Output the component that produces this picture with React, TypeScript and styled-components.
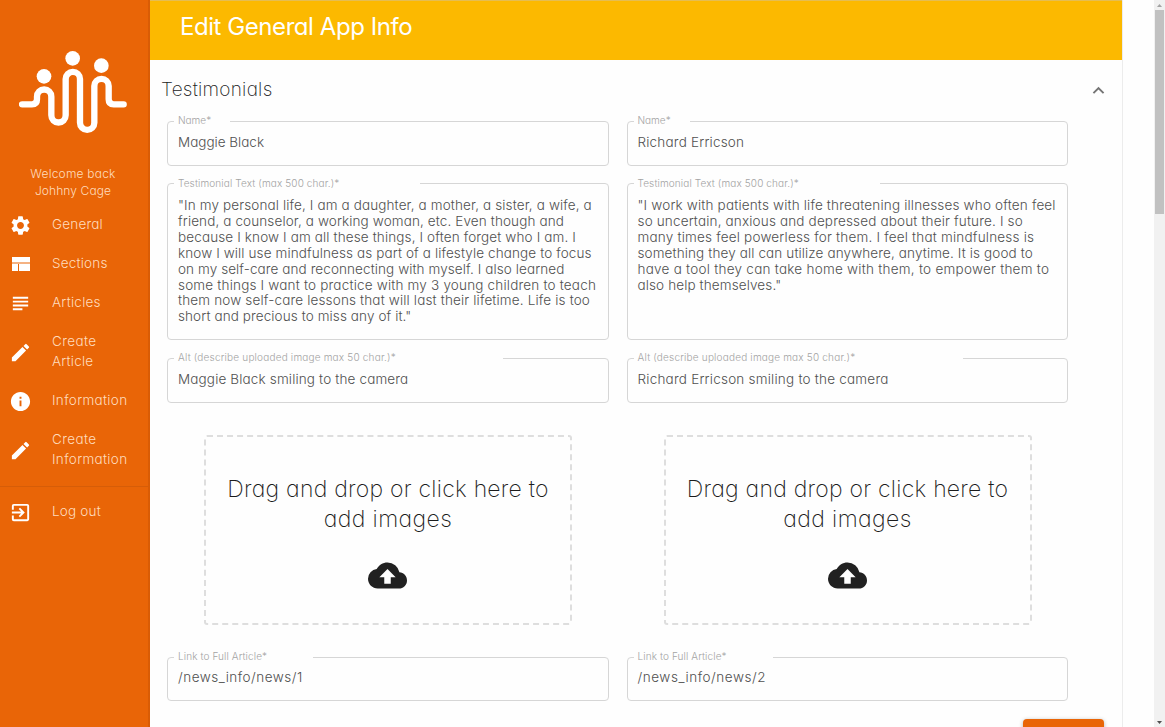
import React from "react";
import styled, { createGlobalStyle } from "styled-components";
import { MdSettings, MdSubject, MdEdit, MdInfo, MdExitToApp, MdExpandLess, MdCloudUpload } from "react-icons/md";

const GlobalStyle = createGlobalStyle`
  *, *::before, *::after { box-sizing: border-box; }
  body {
    margin: 0;
    background: #fefefe;
    overflow: hidden;
    font-family: Inter, "Open Sans", sans-serif;
    font-weight: 300;
    font-feature-settings: "cv11" 1;
  }
`;

const Page = styled.div`
  display: flex;
  height: 727px;
  overflow: hidden;
`;

const Sidebar = styled.aside`
  width: 150px;
  flex: none;
  background: #e96507;
  border-right: 2px solid #d95c05;
  color: #ffdcbd;
`;

const Logo = styled.svg`
  display: block;
  width: 108px;
  height: 84px;
  margin: 51px 0 0 19px;
`;

const Welcome = styled.div`
  margin-top: 30px;
  width: 146px;
  text-align: center;
  font-size: 12px;
  line-height: 17px;
`;

const Line = styled.div<{ $track?: number }>`
  white-space: nowrap;
  letter-spacing: ${(p) => p.$track ?? 0}px;
`;

const Nav = styled.nav`
  margin-top: 6px;
`;

const NavItem = styled.a`
  display: flex;
  align-items: center;
  padding: 9px 0 10px 9px;
  font-size: 13.5px;
  line-height: 20px;

  svg {
    width: 23px;
    height: 23px;
    margin: 0 20px -3px 0;
    color: #fff;
    flex: none;
  }
`;

const NavDivider = styled.hr`
  border: 0;
  height: 1px;
  margin: 7px 0 5px;
  background: #d65d08;
`;

const Content = styled.main`
  width: 973px;
  flex: none;
  border-right: 1px solid #ececec;
`;

const Header = styled.header`
  height: 60px;
  width: 972px;
  padding: 11px 0 0 30px;
  background: #fcb900;
  border-top: 1px solid #e5bd52;
  color: #fff;
  font-size: 24px;
  font-weight: 400;
  line-height: 30px;
`;

const PanelHeader = styled.div`
  display: flex;
  justify-content: space-between;
  align-items: center;
  height: 60px;
  padding: 0 12px 2px 11px;
  font-size: 19px;
  font-weight: 200;
  color: #1c1c1c;

  svg {
    width: 23px;
    height: 23px;
    color: #757575;
    margin-top: 3px;
  }
`;

const Columns = styled.div`
  display: grid;
  grid-template-columns: 441.5px 441.5px;
  column-gap: 18px;
  padding: 0 0 0 17px;
  margin-top: -5px;
`;

const Column = styled.div`
  display: flex;
  flex-direction: column;
`;

const Field = styled.fieldset<{ $height: number; $gap: number }>`
  margin: 0 0 ${(p) => p.$gap}px;
  height: ${(p) => p.$height}px;
  min-width: 0;
  padding: 0 10px;
  border: 1px solid #d6d6d6;
  border-radius: 4px;
  color: #505050;
  font-size: 13.5px;
  line-height: 15.9px;
`;

const Label = styled.legend<{ $notch: number; $leading?: number }>`
  width: ${(p) => p.$notch}px;
  height: 13px;
  margin-left: -4px;
  padding: 0 0 0 4px;
  font-size: 10px;
  line-height: ${(p) => p.$leading ?? 11}px;
  color: #a3a3a3;
`;

const Value = styled.div<{ $top?: number }>`
  padding-top: ${(p) => p.$top ?? 7}px;
`;

const DropZone = styled.div`
  width: 368px;
  height: 190px;
  margin: 0 0 26px 37px;
  padding-top: 37px;
  border: 2px dashed #dedede;
  border-radius: 3px;
  display: flex;
  flex-direction: column;
  align-items: center;
  text-align: center;
  font-size: 23px;
  font-weight: 200;
  line-height: 30px;
  color: #1c1c1c;

  svg {
    width: 39px;
    height: 39px;
    margin: 22px 1px 0 0;
    color: #212121;
  }
`;

const Actions = styled.div`
  display: flex;
  justify-content: flex-end;
  padding: 0 18px 0 0;
`;

const SaveButton = styled.button`
  width: 81px;
  height: 35px;
  border: 0;
  border-radius: 4px;
  background: #e96507;
  box-shadow: 0 1px 4px rgba(0, 0, 0, 0.3);
`;

const Scrollbar = styled.div`
  width: 11px;
  margin-left: auto;
  background: #f1f1f1;
  display: flex;
  flex-direction: column;
  align-items: center;
`;

const Arrow = styled.svg`
  width: 11px;
  height: 10px;
  flex: none;
`;

const Thumb = styled.div`
  width: 9px;
  height: 204px;
  margin-bottom: auto;
  background: #c1c1c1;
`;

type Text = [string, number?];

const notches = { name: 56, story: 246, alt: 329, link: 139 };

const people: { name: Text; story: Text[]; alt: Text; link: Text }[] = [
  {
    name: ["Maggie Black"],
    story: [
      ['"In my personal life, I am a daughter, a mother, a sister, a wife, a', 0.13],
      ["friend, a counselor, a working woman, etc. Even though and", 0.12],
      ["because I know I am all these things, I often forget who I am. I", 0.13],
      ["know I will use mindfulness as part of a lifestyle change to focus", 0.11],
      ["on my self-care and reconnecting with myself. I also learned", 0.09],
      ["some things I want to practice with my 3 young children to teach", 0.19],
      ["them now self-care lessons that will last their lifetime. Life is too", 0.16],
      ['short and precious to miss any of it."', 0.1],
    ],
    alt: ["Maggie Black smiling to the camera", 0.15],
    link: ["/news_info/news/1", 0.5],
  },
  {
    name: ["Richard Erricson", 0.2],
    story: [
      ['"I work with patients with life threatening illnesses who often feel', 0.17],
      ["so uncertain, anxious and depressed about their future. I so", 0.16],
      ["many times feel powerless for them. I feel that mindfulness is", 0.2],
      ["something they all can utilize anywhere, anytime. It is good to", 0.12],
      ["have a tool they can take home with them, to empower them to", 0.25],
      ['also help themselves."', 0.12],
    ],
    alt: ["Richard Erricson smiling to the camera", 0.22],
    link: ["/news_info/news/2", 0.55],
  },
];

const T = ({ t }: { t: Text }) => <Line $track={t[1]}>{t[0]}</Line>;

const SectionsIcon = () => (
  <svg viewBox="0 0 23 23" fill="#fff">
    <path d="M3 4h18v5H3zM3 11h6v7H3zM10 11h11v7H10z" />
    <path d="M3 9h18v2H3z" opacity=".5" />
  </svg>
);

export default function App() {
  return (
    <>
      <GlobalStyle />
      <Page>
        <Sidebar>
          <Logo viewBox="57 63 324 252" fill="#fff">
            <circle cx="132" cy="139" r="22" />
            <circle cx="218" cy="85" r="22" />
            <circle cx="304" cy="107" r="22" />
            <path
              d="M66 225H96Q111 225 111 210V202A21.5 21.5 0 0 1 154 202V258A21.5 21.5 0 0 0 197 258V149A21.5 21.5 0 0 1 240 149V280A21.5 21.5 0 0 0 283 280V170A21.5 21.5 0 0 1 326 170V210Q326 225 341 225H371"
              transform="translate(0 -2)"
              fill="none"
              stroke="#fff"
              strokeWidth="19"
              strokeLinecap="round"
            />
          </Logo>
          <Welcome>
            <T t={["Welcome back", 0.2]} />
            <T t={["Johhny Cage", 0.1]} />
          </Welcome>
          <Nav>
            <NavItem><MdSettings /><T t={["General", 0.2]} /></NavItem>
            <NavItem><SectionsIcon /><T t={["Sections", 0.2]} /></NavItem>
            <NavItem><MdSubject /><T t={["Articles", 0.25]} /></NavItem>
            <NavItem><MdEdit /><div><T t={["Create", 0.4]} /><T t={["Article", 0.2]} /></div></NavItem>
            <NavItem><MdInfo /><T t={["Information", 0.33]} /></NavItem>
            <NavItem><MdEdit /><div><T t={["Create", 0.4]} /><T t={["Information", 0.33]} /></div></NavItem>
            <NavDivider />
            <NavItem><MdExitToApp /><T t={["Log out", 0.2]} /></NavItem>
          </Nav>
        </Sidebar>
        <Content>
          <Header><T t={["Edit General App Info", -0.44]} /></Header>
          <PanelHeader><T t={["Testimonials", 0.25]} /><MdExpandLess /></PanelHeader>
          <Columns>
            {people.map((p) => (
              <Column key={p.name[0]}>
                <Field $height={51} $gap={11}>
                  <Label $notch={notches.name}><T t={["Name*"]} /></Label>
                  <Value><T t={p.name} /></Value>
                </Field>
                <Field $height={163} $gap={12}>
                  <Label $notch={notches.story} $leading={12}><T t={["Testimonial Text (max 500 char.)*", 0.12]} /></Label>
                  <Value $top={8}>{p.story.map((t) => <T key={t[0]} t={t} />)}</Value>
                </Field>
                <Field $height={51} $gap={32}>
                  <Label $notch={notches.alt}><T t={["Alt (describe uploaded image max 50 char.)*", 0.19]} /></Label>
                  <Value><T t={p.alt} /></Value>
                </Field>
                <DropZone>
                  <T t={["Drag and drop or click here to", 0.24]} />
                  <T t={["add images", 0.4]} />
                  <MdCloudUpload />
                </DropZone>
                <Field $height={50} $gap={18}>
                  <Label $notch={notches.link}><T t={["Link to Full Article*", 0.1]} /></Label>
                  <Value $top={6}><T t={p.link} /></Value>
                </Field>
              </Column>
            ))}
          </Columns>
          <Actions><SaveButton aria-label="Save" /></Actions>
        </Content>
        <Scrollbar>
          <Arrow viewBox="0 0 11 10"><path d="M3 7l2.5-3L8 7z" fill="#a3a3a3" /></Arrow>
          <Thumb />
          <Arrow viewBox="0 0 11 10"><path d="M3 4l2.5 3L8 4z" fill="#505050" /></Arrow>
        </Scrollbar>
      </Page>
    </>
  );
}
